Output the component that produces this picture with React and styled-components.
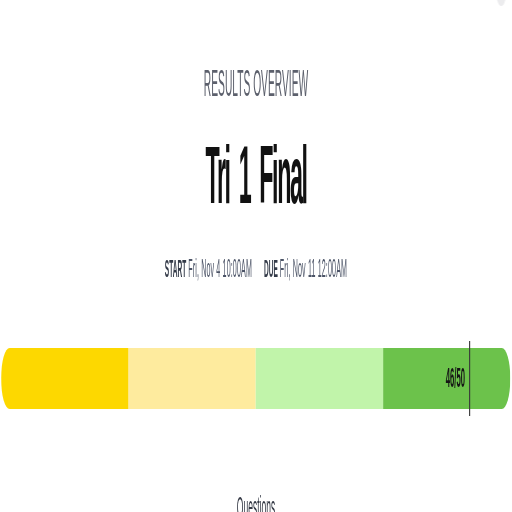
import React from 'react';
import styled, { createGlobalStyle } from 'styled-components';

const SCALE = 512 / 1800;

const GlobalStyle = createGlobalStyle`
    html, body {
        margin: 0;
        padding: 0;
        background: #ffffff;
        overflow: hidden;
    }
    body {
        font-family: "Liberation Sans", Arial, sans-serif;
    }
`;

const Viewport = styled.div`
    width: 512px;
    height: 512px;
    overflow: hidden;
    position: relative;
`;

const Page = styled.div`
    width: 1800px;
    transform: scaleX(${SCALE});
    transform-origin: 0 0;
    position: relative;
    display: flex;
    flex-direction: column;
    align-items: center;
`;

const Avatar = styled.div`
    position: absolute;
    top: -34px;
    right: 18px;
    width: 40px;
    height: 40px;
    border-radius: 50%;
    background: #ececee;
`;

const Eyebrow = styled.div`
    margin-top: 66px;
    font-size: 36px;
    line-height: 36px;
    color: #5c606c;
`;

const Title = styled.h1`
    margin: 32px 0 0;
    font-size: 82px;
    line-height: 82px;
    font-weight: 700;
    color: #111111;
    letter-spacing: -5px;
    word-spacing: 14px;
`;

const Dates = styled.div`
    margin-top: 41px;
    display: flex;
    align-items: baseline;
    gap: 42px;
    line-height: 23px;
`;

const DateItem = styled.div`
    display: flex;
    align-items: baseline;
    gap: 7px;
`;

const DateLabel = styled.span`
    font-size: 23px;
    font-weight: 700;
    color: #333a48;
`;

const DateValue = styled.span`
    font-size: 25px;
    color: #4b5366;
    letter-spacing: 0.5px;
`;

const BarWrap = styled.div`
    position: relative;
    align-self: stretch;
    margin: 67px 6px 0 4px;
`;

const Bar = styled.div`
    display: flex;
    height: 61px;
    border-radius: 30px;
    overflow: hidden;
`;

const Segment = styled.div`
    flex: 1;
    background: ${p => p.$color};
`;

const Marker = styled.div`
    position: absolute;
    top: -7px;
    bottom: -7px;
    width: 4px;
    margin-left: -2px;
    background: #3a3a3a;
`;

const Score = styled.div`
    position: absolute;
    top: 0;
    height: 61px;
    display: flex;
    align-items: center;
    transform: translateX(-100%);
    padding-right: 16px;
    font-size: 27px;
    font-weight: 700;
    color: #151515;
`;

const Footer = styled.div`
    margin-top: 83px;
    font-size: 30px;
    line-height: 30px;
    color: #333844;
`;

const segments = ['#fdd800', '#feeb9e', '#c1f4aa', '#6cc24b'];

export default function App() {
    const score = 46;
    const total = 50;
    const pct = (score / total) * 100;

    return (
        <Viewport>
            <GlobalStyle />
            <Page>
                <Avatar />
                <Eyebrow>RESULTS OVERVIEW</Eyebrow>
                <Title>Tri 1 Final</Title>
                <Dates>
                    <DateItem>
                        <DateLabel>START</DateLabel>
                        <DateValue>Fri, Nov 4 10:00AM</DateValue>
                    </DateItem>
                    <DateItem>
                        <DateLabel>DUE</DateLabel>
                        <DateValue>Fri, Nov 11 12:00AM</DateValue>
                    </DateItem>
                </Dates>
                <BarWrap>
                    <Bar>
                        {segments.map(c => <Segment key={c} $color={c} />)}
                    </Bar>
                    <Score style={{ left: `${pct}%` }}>{score}/{total}</Score>
                    <Marker style={{ left: `${pct}%` }} />
                </BarWrap>
                <Footer>Questions</Footer>
            </Page>
        </Viewport>
    );
}
